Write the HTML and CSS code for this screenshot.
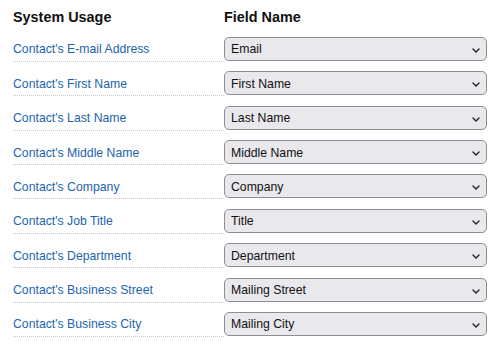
FILE: index.html
```html
<!DOCTYPE html>
<html lang="en">
<head>
    <meta charset="UTF-8">
    <meta name="viewport" content="width=device-width, initial-scale=1.0">
    <title>Field Mapping</title>
    <link rel="stylesheet" href="styles.css">
</head>
<body>
    <div id="mapping">
        <div class="head">
            <div class="col-usage">System Usage</div>
            <div class="col-field">Field Name</div>
        </div>
        <div id="rows"></div>
    </div>
    <script>
        const mappings = [
            ["Contact's E-mail Address", 'Email'],
            ["Contact's First Name", 'First Name'],
            ["Contact's Last Name", 'Last Name'],
            ["Contact's Middle Name", 'Middle Name'],
            ["Contact's Company", 'Company'],
            ["Contact's Job Title", 'Title'],
            ["Contact's Department", 'Department'],
            ["Contact's Business Street", 'Mailing Street'],
            ["Contact's Business City", 'Mailing City']
        ];
        const options = mappings.map(m => m[1]);
        const rows = document.getElementById('rows');

        mappings.forEach(function (m) {
            const row = document.createElement('div');
            row.className = 'row';

            const usage = document.createElement('div');
            usage.className = 'col-usage';
            const link = document.createElement('a');
            link.href = '#';
            link.textContent = m[0];
            usage.appendChild(link);

            const field = document.createElement('div');
            field.className = 'col-field picker';
            const select = document.createElement('select');
            options.forEach(function (o) {
                const opt = document.createElement('option');
                opt.textContent = o;
                if (o === m[1]) opt.selected = true;
                select.appendChild(opt);
            });
            field.appendChild(select);
            field.insertAdjacentHTML('beforeend',
                '<svg class="chevron" width="8" height="5" viewBox="0 0 8 5"><path d="M1 1 L4 4 L7 1" fill="none" stroke="#222" stroke-width="1.4" stroke-linecap="round" stroke-linejoin="round"/></svg>');

            row.appendChild(usage);
            row.appendChild(field);
            rows.appendChild(row);
        });
    </script>
</body>
</html>
```

FILE: styles.css
```css
body {
    margin: 0;
    font-family: "Liberation Sans", Arial, Helvetica, sans-serif;
    background-color: #fff;
    color: #111;
}
#mapping {
    padding: 0 13px;
}
.head {
    display: flex;
    height: 27.6px;
    padding-top: 7.8px;
    box-sizing: border-box;
    font-size: 14.4px;
    font-weight: bold;
    line-height: 18px;
    color: #111;
}
.col-usage {
    width: 211px;
    flex: none;
}
.col-field {
    width: 263px;
    flex: none;
}
.row {
    display: flex;
    height: 34.375px;
    padding-top: 9.375px;
    box-sizing: border-box;
}
.row .col-usage {
    display: flex;
    align-items: center;
    height: 24px;
    border-bottom: 1px dotted #c4c4c4;
}
.row a {
    color: #1d64ad;
    text-decoration: none;
    font-size: 12.25px;
    padding-top: 1px;
}
.picker {
    position: relative;
    height: 24px;
}
.picker select {
    appearance: none;
    -webkit-appearance: none;
    width: 100%;
    height: 24px;
    margin: 0;
    padding: 1px 20px 0 6px;
    box-sizing: border-box;
    font-family: "Liberation Sans", Arial, Helvetica, sans-serif;
    font-size: 12.25px;
    color: #111;
    background-color: #e9e8ed;
    border: 1px solid #8e8d93;
    border-radius: 5px;
    outline: none;
}
.chevron {
    position: absolute;
    right: 7px;
    top: 11px;
    pointer-events: none;
}
```
